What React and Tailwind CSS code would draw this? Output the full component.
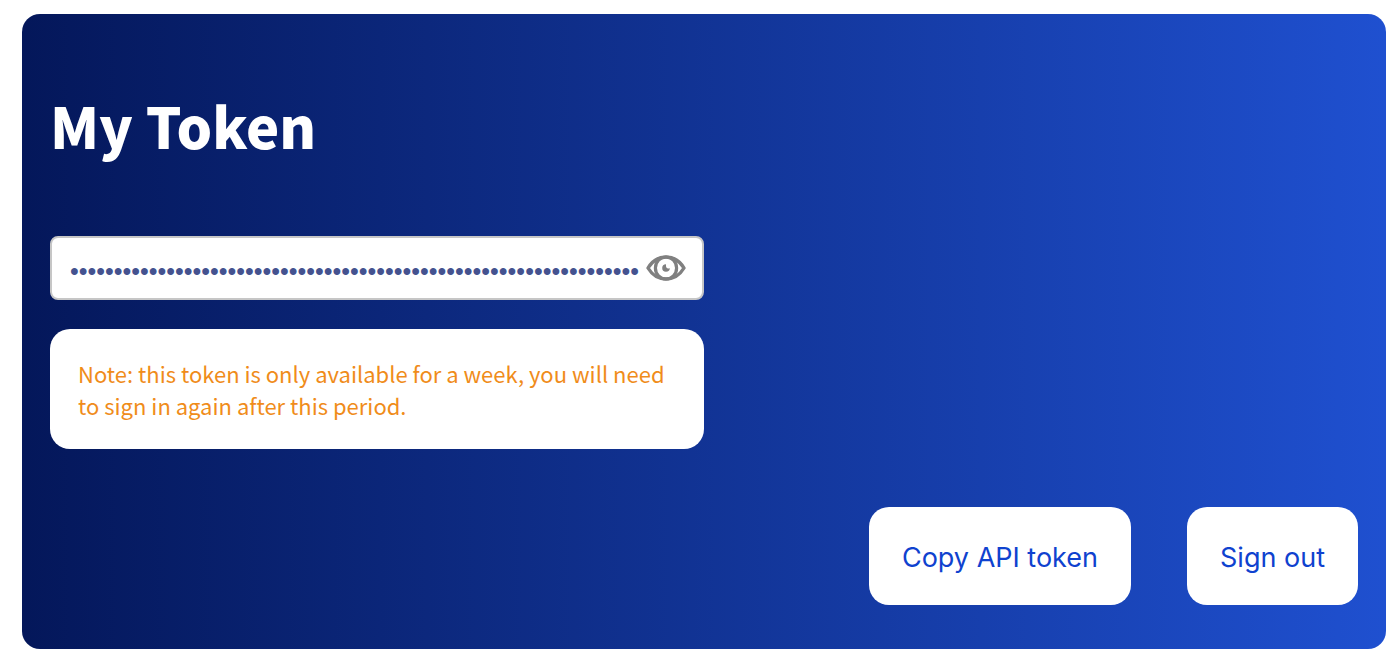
import { useState } from "react";

const TOKEN = "a".repeat(65);

function EyeIcon() {
  return (
    <svg viewBox="0 0 40 26" className="h-[26px] w-10" fill="none" aria-hidden="true">
      <path
        d="M2 13C6.500 5.500 12.500 2 20 2S33.500 5.500 38 13C33.500 20.500 27.500 24 20 24S6.500 20.500 2 13Z"
        stroke="#808080"
        strokeWidth="3.400"
        strokeLinejoin="round"
      />
      <ellipse cx="20" cy="13" rx="10.600" ry="11" stroke="#808080" strokeWidth="3.200" />
      <path d="M20 9.200A3.800 3.800 0 1 0 23.800 13A2.300 2.300 0 0 1 20 11.300Z" fill="#808080" />
    </svg>
  );
}

function ActionButton({ children, onClick }) {
  return (
    <button
      type="button"
      onClick={onClick}
      className="cursor-pointer rounded-[20px] bg-white px-[33px] pt-[30px] pb-[26px] font-['Inter',sans-serif] text-[27px] leading-[42px] text-[#0f42cf]"
    >
      {children}
    </button>
  );
}

export default function App() {
  const [visible, setVisible] = useState(false);

  return (
    <main className="bg-white pt-[14px] pr-[14px] pb-6 pl-[22px] font-['Noto_Sans_CJK_SC',sans-serif]">
      <section className="rounded-[18px] bg-linear-to-r/srgb from-[#04175a] to-[#1f50d0] px-7 pt-[68px] pb-11">
        <h1 className="text-[56px] leading-[86px] font-black text-white">My Token</h1>

        <div className="mt-[68px] flex h-16 w-1/2 items-center rounded-lg border-2 border-[#c6c6c6] bg-white pr-4 pl-[18px]">
          <input
            type={visible ? "text" : "password"}
            aria-label="API token"
            readOnly
            value={TOKEN}
            className="min-w-0 flex-1 bg-transparent pt-[6px] font-['Liberation_Sans',sans-serif] text-[25px] leading-8 text-[#44528f] outline-none"
          />
          <button
            type="button"
            aria-label="Show token"
            onClick={() => setVisible(!visible)}
            className="shrink-0 cursor-pointer"
          >
            <EyeIcon />
          </button>
        </div>

        <p className="mt-[29px] w-1/2 rounded-[20px] bg-white p-7 text-[22px] leading-8 text-[#f08c1a]">
          Note: this token is only available for a week, you will need to sign in again after this period.
        </p>

        <div className="mt-[58px] flex justify-end gap-14">
          <ActionButton onClick={() => navigator.clipboard?.writeText(TOKEN)}>Copy API token</ActionButton>
          <ActionButton>Sign out</ActionButton>
        </div>
      </section>
    </main>
  );
}
